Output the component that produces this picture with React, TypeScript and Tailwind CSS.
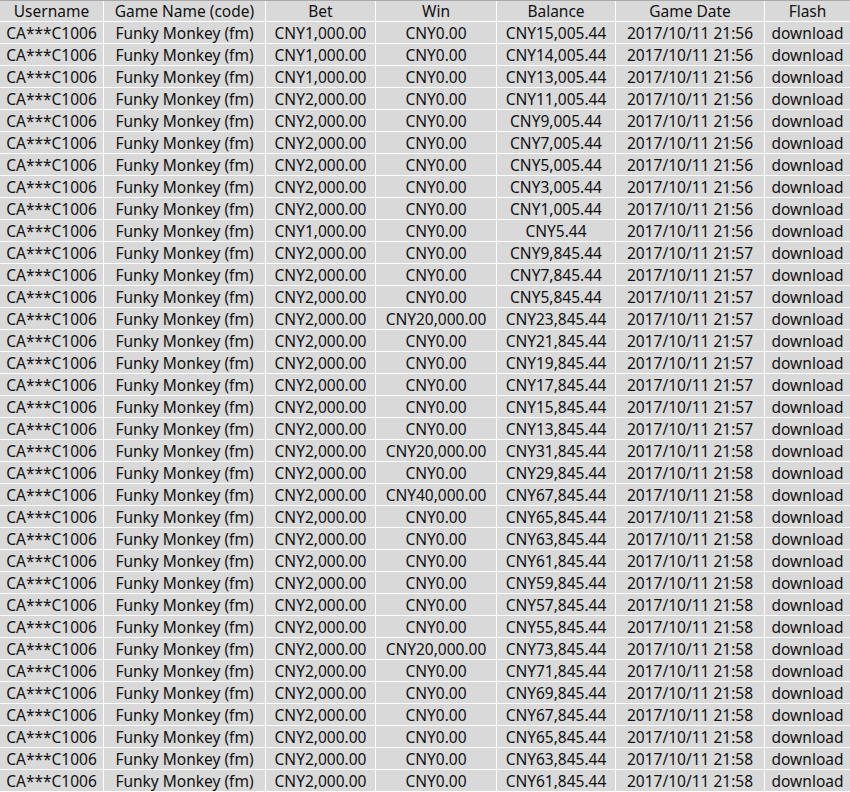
import React from "react";

const balances = [
  "CNY15,005.44","CNY14,005.44","CNY13,005.44","CNY11,005.44","CNY9,005.44","CNY7,005.44","CNY5,005.44","CNY3,005.44","CNY1,005.44","CNY5.44",
  "CNY9,845.44","CNY7,845.44","CNY5,845.44","CNY23,845.44","CNY21,845.44","CNY19,845.44","CNY17,845.44","CNY15,845.44","CNY13,845.44","CNY31,845.44",
  "CNY29,845.44","CNY67,845.44","CNY65,845.44","CNY63,845.44","CNY61,845.44","CNY59,845.44","CNY57,845.44","CNY55,845.44","CNY73,845.44","CNY71,845.44",
  "CNY69,845.44","CNY67,845.44","CNY65,845.44","CNY63,845.44","CNY61,845.44",
];
const bets: Record<number, string> = { 0: "CNY1,000.00", 1: "CNY1,000.00", 2: "CNY1,000.00", 9: "CNY1,000.00" };
const wins: Record<number, string> = { 13: "CNY20,000.00", 19: "CNY20,000.00", 21: "CNY40,000.00", 28: "CNY20,000.00" };

const rows = balances.map((b, i) => ({
  user: "CA***C1006",
  game: "Funky Monkey (fm)",
  bet: bets[i] ?? "CNY2,000.00",
  win: wins[i] ?? "CNY0.00",
  balance: b,
  date: i < 10 ? "2017/10/11 21:56" : i < 19 ? "2017/10/11 21:57" : "2017/10/11 21:58",
  flash: "download",
}));

const widths = ["w-[104px]", "w-[162px]", "w-[110px]", "w-[121px]", "w-[119px]", "w-[149px]", "w-[85px]"];

function Row({ cells, header }: { cells: string[]; header?: boolean }) {
  return (
    <div className={`flex h-[22px] border-b border-white ${header ? "border-t border-t-[#a8a8a8]" : ""}`}>
      {cells.map((c, i) => (
        <div
          key={i}
          className={`${widths[i]} shrink-0 flex items-center justify-center whitespace-nowrap pt-[2px] ${i < 6 ? "border-r border-white" : ""}`}
        >
          {c}
        </div>
      ))}
    </div>
  );
}

export default function App() {
  return (
    <div
      className="w-[850px] h-[792px] overflow-hidden bg-[#d9d9d9] text-[#111] text-[15.5px] leading-none"
      style={{ fontFamily: '"Noto Sans", "Open Sans", sans-serif' }}
    >
      <Row header cells={["Username", "Game Name (code)", "Bet", "Win", "Balance", "Game Date", "Flash"]} />
      {rows.map((r, i) => (
        <Row key={i} cells={[r.user, r.game, r.bet, r.win, r.balance, r.date, r.flash]} />
      ))}
    </div>
  );
}
